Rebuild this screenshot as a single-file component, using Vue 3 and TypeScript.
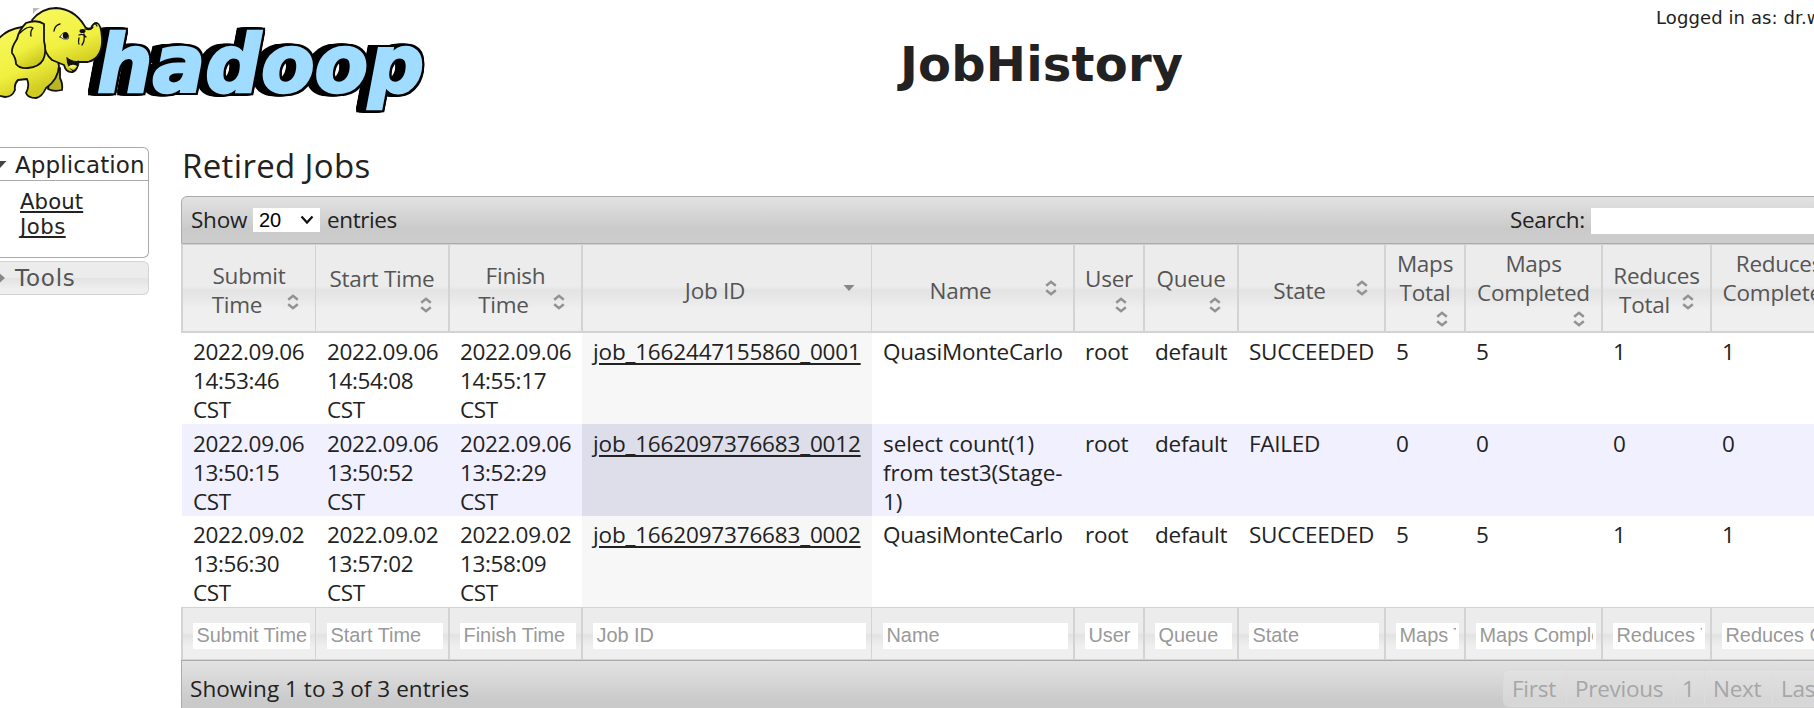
<script setup lang="ts">
interface Column {
  key: string
  lines: string[]
  kind: 'inline' | 'below' | 'single'
  sorted?: boolean
}

const columns: Column[] = [
  { key: 'Submit Time', lines: ['Submit', 'Time'], kind: 'inline' },
  { key: 'Start Time', lines: ['Start Time'], kind: 'below' },
  { key: 'Finish Time', lines: ['Finish', 'Time'], kind: 'inline' },
  { key: 'Job ID', lines: ['Job ID'], kind: 'single', sorted: true },
  { key: 'Name', lines: ['Name'], kind: 'single' },
  { key: 'User', lines: ['User'], kind: 'below' },
  { key: 'Queue', lines: ['Queue'], kind: 'below' },
  { key: 'State', lines: ['State'], kind: 'single' },
  { key: 'Maps Total', lines: ['Maps', 'Total'], kind: 'below' },
  { key: 'Maps Completed', lines: ['Maps', 'Completed'], kind: 'below' },
  { key: 'Reduces Total', lines: ['Reduces', 'Total'], kind: 'inline' },
  { key: 'Reduces Completed', lines: ['Reduces', 'Completed'], kind: 'below' },
]

const jobs: string[][][] = [
  [
    ['2022.09.06', '14:53:46', 'CST'], ['2022.09.06', '14:54:08', 'CST'], ['2022.09.06', '14:55:17', 'CST'],
    ['job_1662447155860_0001'], ['QuasiMonteCarlo'], ['root'], ['default'], ['SUCCEEDED'], ['5'], ['5'], ['1'], ['1'],
  ],
  [
    ['2022.09.06', '13:50:15', 'CST'], ['2022.09.06', '13:50:52', 'CST'], ['2022.09.06', '13:52:29', 'CST'],
    ['job_1662097376683_0012'], ['select count(1)', 'from test3(Stage-', '1)'], ['root'], ['default'], ['FAILED'], ['0'], ['0'], ['0'], ['0'],
  ],
  [
    ['2022.09.02', '13:56:30', 'CST'], ['2022.09.02', '13:57:02', 'CST'], ['2022.09.02', '13:58:09', 'CST'],
    ['job_1662097376683_0002'], ['QuasiMonteCarlo'], ['root'], ['default'], ['SUCCEEDED'], ['5'], ['5'], ['1'], ['1'],
  ],
]

const pages = ['First', 'Previous', '1', 'Next', 'Last']
</script>

<template>
  <div class="page">
    <header class="top">
      <svg class="logo" width="430" height="120" viewBox="0 0 430 120">
        <defs>
          <linearGradient id="hide" x1="0" y1="0" x2="0.4" y2="1">
            <stop offset="0" stop-color="#f8f860" />
            <stop offset="0.65" stop-color="#f0f040" />
            <stop offset="1" stop-color="#cfcb20" />
          </linearGradient>
        </defs>
        <text class="wordmark" x="97" y="92" textLength="327" lengthAdjust="spacingAndGlyphs">hadoop</text>
        <g fill="url(#hide)" stroke="#111" stroke-width="1.8" stroke-linejoin="round" stroke-linecap="round">
          <path d="M50 76 L48 89 Q54 92 62 90 Q63 84 60 78 L60 68Z" fill="#b9b622" />
          <path d="M-4 42 Q4 30 22 27 Q45 30 55 48 L59 66 Q58 80 46 88 Q42 97 36 98 Q28 98 26 93 Q30 86 27 79 L18 80 Q14 84 15 90 Q12 97 5 97 L-4 95Z" />
          <path d="M32 20 Q42 8 56 8 Q74 9 84 25 Q86 30 91 28 Q93 23 97 23 Q101 24 102 38 Q103 58 88 62 L77 62 Q79 69 73 72 Q66 73 64 65 L52 60 Q44 53 44 42 L34 26Z" />
          <path d="M44 24 Q37 19 26 23 Q19 30 17 39 Q11 48 12 53 Q16 58 16 64 Q20 69 28 68 Q39 67 43 60 Q47 52 44 41Z" />
          <path d="M67 58 Q74 63 79 61 Q79 69 73 71 Q67 67 67 58Z" fill="#111" stroke-width="1" />
          <path d="M68 67 Q72 63 77 66 Q75 70 73 70Z" stroke="none" />
          <path d="M20 33 Q28 25 33 28 Q30 31 31 36 M54 31 Q55 25 60 24 M79 38 Q78 42 79 44 M84 34 Q85 41 82 45 M79 35 Q83 33 86 37 M85 29 Q91 31 93 27 M95 23 L97 26" fill="none" stroke-width="1.3" />
          <path d="M60 37 Q63 31 67 33 Q70 36 68 39 Q63 40 60 37Z" fill="#fff" stroke-width="0.8" />
        </g>
        <ellipse cx="65.5" cy="35.5" rx="2.7" ry="3.3" fill="#111" />
        <ellipse cx="82.5" cy="31" rx="3" ry="2" fill="#111" />
        <path d="M33 14 L33 8 L40 8 Q36 10 33 14Z" fill="#bbb" />
      </svg>
      <h1>JobHistory</h1>
      <div class="user">Logged in as: dr.who</div>
    </header>

    <div class="body">
      <nav class="side">
        <div class="panel open">
          <div class="panel-head">
            <svg width="15" height="12" viewBox="0 0 15 12"><path d="M-6 2H6.500L0 9Z" fill="#444" /></svg>
            <span>Application</span>
          </div>
          <div class="links"><a>About</a><a>Jobs</a></div>
        </div>
        <div class="panel closed">
          <svg width="15" height="14" viewBox="0 0 15 14"><path d="M-3 0L5 7L-3 14Z" fill="#888" /></svg>
          <span>Tools</span>
        </div>
      </nav>

      <main class="content">
        <h2>Retired Jobs</h2>
        <div class="toolbar">
          <span class="show">Show</span>
          <span class="select">20
            <svg width="14" height="10" viewBox="0 0 14 10"><path d="M1.500 1.500L7 7.500L12.500 1.500" fill="none" stroke="#111" stroke-width="2.200" /></svg>
          </span>
          <span class="entries">entries</span>
          <span class="search">Search:</span>
          <span class="search-box"></span>
        </div>

        <div class="row head">
          <div v-for="c in columns" :key="c.key" class="cell" :class="[c.kind, { tall: c.lines.length > 1 }]">
            <span v-for="l in c.lines" :key="l" class="line">{{ l }}</span>
            <svg class="sort" width="12" height="16" viewBox="0 0 12 16">
              <path v-if="c.sorted" d="M0.500 5H11.500L6 11Z" fill="#888" />
              <path v-else d="M1.200 5.800L6 1.800L10.800 5.800M1.200 10.200L6 14.200L10.800 10.200" fill="none" stroke="#929292" stroke-width="2.500" />
            </svg>
          </div>
        </div>

        <div v-for="(job, i) in jobs" :key="i" class="row data" :class="{ stripe: i === 1 }">
          <div v-for="(v, j) in job" :key="j" class="cell" :class="{ sorted: j === 3 }">
            <a v-if="j === 3">{{ v[0] }}</a>
            <template v-else><span v-for="l in v" :key="l" class="line">{{ l }}</span></template>
          </div>
        </div>

        <div class="row foot">
          <div v-for="c in columns" :key="c.key" class="cell"><span class="filter">{{ c.key }}</span></div>
        </div>

        <div class="bottom">
          <span class="info">Showing 1 to 3 of 3 entries</span>
          <div class="pager"><span v-for="p in pages" :key="p" :class="'p-' + p">{{ p }}</span></div>
        </div>
      </main>
    </div>
  </div>
</template>

<style>
body { margin: 0; overflow: hidden; }
</style>

<style scoped>
* { box-sizing: border-box; }
.page {
  width: 1814px; height: 708px; overflow: hidden; background: #fff; color: #222;
  font: 22.5px/29px "Open Sans", "Noto Sans", sans-serif; letter-spacing: -0.25px; white-space: nowrap;
}
.top { display: flex; height: 147px; font-family: "DejaVu Sans", sans-serif; letter-spacing: 0; }
.logo { flex: none; }
.wordmark {
  font: italic bold 81px "DejaVu Sans", sans-serif; fill: #9fdcff; stroke: #9fdcff; stroke-width: 2.5px;
  filter: drop-shadow(2px 0 0 #000) drop-shadow(0 2px 0 #000) drop-shadow(0 -2px 0 #000)
    drop-shadow(-3px 0 0 #000) drop-shadow(-4px 0 0 #000) drop-shadow(-3px 0 0 #000);
}
h1 { flex: none; width: 756px; margin: 35px 0 0 470px; font-size: 48px; line-height: 58px; letter-spacing: 0.2px; }
.user { flex: none; padding-top: 4px; font-size: 18px; line-height: 27px; letter-spacing: 0.1px; }
.body { display: flex; }
.side { flex: none; width: 149px; font-family: "DejaVu Sans", sans-serif; letter-spacing: 0.1px; }
.panel { border: 1px solid #aaa; border-left: 0; border-radius: 0 6px 6px 0; }
.panel.open { height: 111px; }
.panel-head { display: flex; align-items: center; height: 33px; padding-top: 2px; border-bottom: 1px solid #aaa; font-size: 23px; }
.panel svg { flex: none; }
.links { display: flex; flex-direction: column; align-items: flex-start; padding: 8px 0 0 20px; font-size: 21.2px; line-height: 25px; }
.links a { text-decoration: underline; text-decoration-thickness: 2px; text-underline-offset: 2px; text-decoration-skip-ink: none; }
.links a:last-child { letter-spacing: 0.5px; }
.panel.closed {
  display: flex; align-items: center; height: 34px; margin-top: 3px; border-color: #d3d3d3; color: #555; font-size: 23px; letter-spacing: 0.8px;
  background: linear-gradient(#ececec 0 48%, #e3e3e3 52%, #efefef 85%);
}
.content { flex: none; width: 1700px; margin-left: 32px; }
h2 { margin: 0; height: 49px; padding-left: 1px; font-size: 33px; line-height: 38px; font-weight: 400; letter-spacing: 0.35px; }
.toolbar {
  display: flex; align-items: center; height: 48px; padding: 0 0 2px 9px;
  border: 1px solid #aaa; border-radius: 6px 6px 0 0; background: linear-gradient(#e2e2e2, #cacaca 70%, #cdcdcd);
}
.show { width: 62px; }
.select {
  display: flex; align-items: center; justify-content: space-between; width: 67px; height: 24px; padding: 0 6px 0 6px;
  background: #fff; color: #000; font: 20px/24px "Liberation Sans", sans-serif; letter-spacing: 0; margin-top: 2px;
}
.entries { width: 1183px; padding-left: 7px; letter-spacing: -0.4px; }
.entries + .search { margin-left: 7px; }
.search { width: 81px; letter-spacing: -0.35px; }
.search-box { width: 260px; height: 26px; margin-top: 3px; background: #fff; }
.row { display: grid; grid-template-columns: 134px 133px 133px 290px 202px 70px 94px 147px 80px 137px 109px 171px; }
.head .cell, .foot .cell {
  border-left: 2px solid #d3d3d3; background: linear-gradient(#ececec 0 48%, #e3e3e3 53%, #efefef 75%);
}
.head .cell:nth-child(2), .head .cell:nth-child(5), .foot .cell:nth-child(2), .foot .cell:nth-child(5) { border-left-width: 1px; }
.head { height: 89px; border-top: 1px solid #d3d3d3; border-bottom: 2px solid #d3d3d3; color: #555; }
.head .cell { position: relative; display: flex; flex-direction: column; align-items: center; }
.head .cell:last-child { padding-right: 35px; }
.inline { padding-top: 16px; }
.inline .line:nth-child(2) { padding-right: 24px; }
.below { padding-top: 19px; }
.below.tall { padding-top: 4px; }
.single { padding: 31px 24px 0 0; }
.sort { position: absolute; right: 16px; top: 49px; }
.below .sort { top: 52px; }
.below.tall .sort { top: 66px; }
.single .sort { top: 35px; }
.data { height: 91px; }
.data.stripe { height: 92px; background: linear-gradient(90deg, #fff 1px, #f0f0ff 1px); }
.data .cell { display: flex; flex-direction: column; padding: 4px 0 0 12px; }
.data .cell:nth-child(-n+3) { letter-spacing: -0.35px; }
.data.stripe .cell { padding-top: 5px; }
.data.stripe .cell:nth-child(5) { letter-spacing: -0.08px; }
.data .sorted { display: block; margin: 0 -1px 0 1px; padding-left: 11px; background: #f7f7f7; }
.data.stripe .sorted { background: #dedeea; }
.data a { text-decoration: underline; text-decoration-thickness: 2px; text-underline-offset: 3px; letter-spacing: -0.17px; }
.foot { height: 53px; border-top: 1px solid #d3d3d3; border-bottom: 1px solid #d3d3d3; }
.foot .cell { padding: 15px 5px 0 10px; }
.foot .cell:nth-child(2), .foot .cell:nth-child(5) { padding-left: 11px; }
.filter {
  display: block; height: 26px; padding-left: 3.5px; border-right: 3px solid #fff; overflow: hidden; background: #fff; color: #999;
  font: 19.9px/25px "Liberation Sans", sans-serif; letter-spacing: 0;
}
.bottom {
  display: flex; align-items: flex-start; height: 56px; border: 1px solid #aaa; padding: 8px 0 0 8px;
  background: linear-gradient(#e2e2e2, #cacaca 75%);
}
.info { width: 1313px; padding-top: 5px; letter-spacing: 0.05px; }
.pager { display: flex; height: 38px; border: 1px solid #dadada; border-radius: 6px; background: rgba(230, 230, 230, 0.45); color: #a6a6a6; }
.pager span { padding: 4px 0 0 8px; border-left: 1px solid #dcdcdc; }
.pager span:first-child { width: 62px; border-left: 0; }
.p-Previous { width: 107px; }
.p-1 { width: 31px; }
.p-Next { width: 68px; }
.p-Last { width: 70px; }
</style>
